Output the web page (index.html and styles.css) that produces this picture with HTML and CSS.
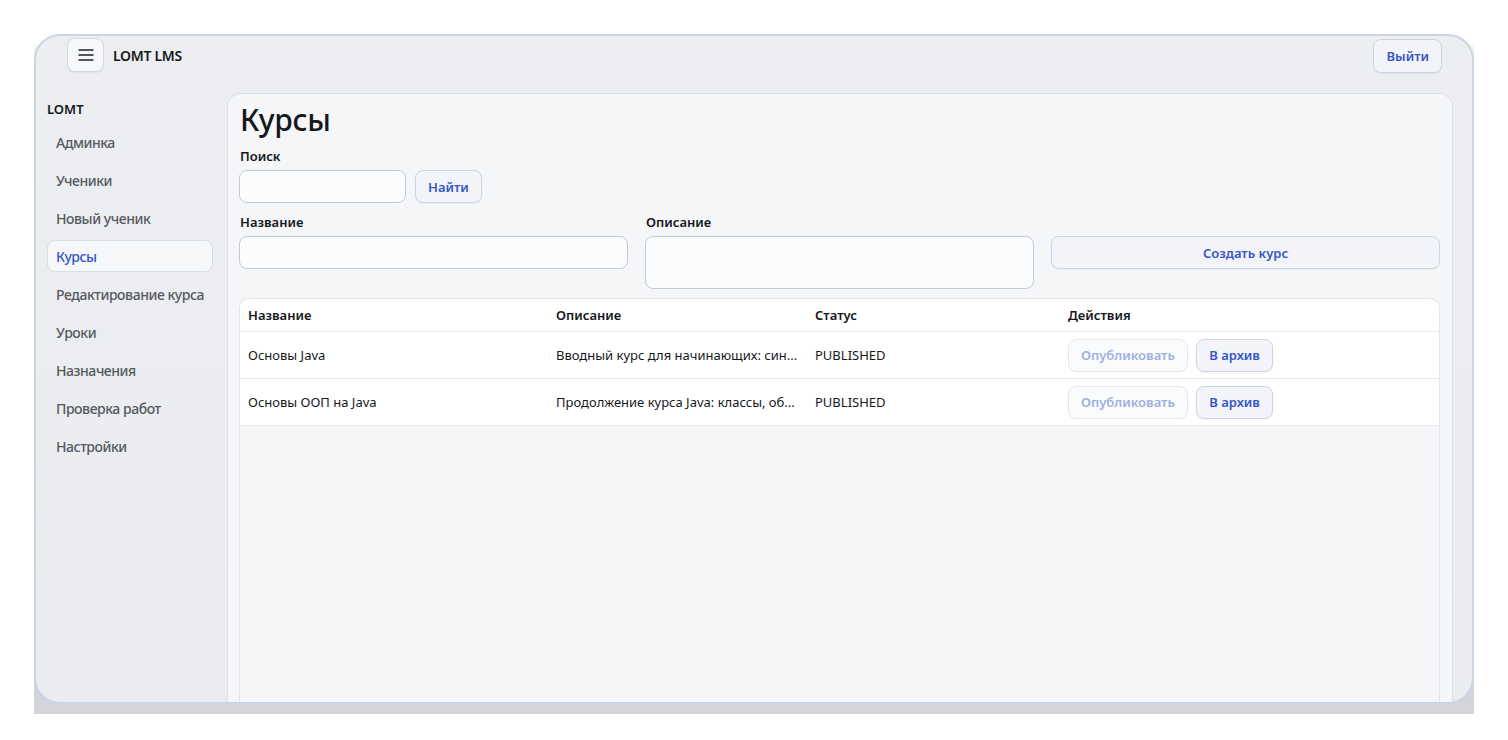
FILE: index.html
```html
<!DOCTYPE html>
<html lang="ru">
<head>
    <meta charset="UTF-8">
    <meta name="viewport" content="width=device-width, initial-scale=1.0">
    <title>LOMT LMS — Курсы</title>
    <link rel="stylesheet" href="styles.css">
</head>
<body>
    <div class="backdrop">
        <div class="app">
            <!-- Top bar -->
            <header class="topbar">
                <div class="brand">
                    <button class="menu-btn" aria-label="Меню">
                        <svg width="16" height="14" viewBox="0 0 16 14" fill="none" stroke="#1f2328" stroke-width="1.4" stroke-linecap="round">
                            <path d="M1 2h14M1 7h14M1 12h14"/>
                        </svg>
                    </button>
                    <span class="brand-name">LOMT LMS</span>
                </div>
                <button class="btn btn-soft logout">Выйти</button>
            </header>

            <div class="layout">
                <!-- Side navigation -->
                <aside class="sidebar">
                    <div class="sidebar-title">LOMT</div>
                    <nav class="nav">
                        <a class="nav-item">Админка</a>
                        <a class="nav-item">Ученики</a>
                        <a class="nav-item">Новый ученик</a>
                        <a class="nav-item active">Курсы</a>
                        <a class="nav-item">Редактирование курса</a>
                        <a class="nav-item">Уроки</a>
                        <a class="nav-item">Назначения</a>
                        <a class="nav-item">Проверка работ</a>
                        <a class="nav-item">Настройки</a>
                    </nav>
                </aside>

                <main class="panel">
                    <h1 class="page-title">Курсы</h1>

                    <label class="field-label">Поиск</label>
                    <div class="search-row">
                        <input type="text" class="input search-input">
                        <button class="btn btn-soft">Найти</button>
                    </div>

                    <!-- New course form -->
                    <div class="create-form">
                        <div class="field">
                            <label class="field-label">Название</label>
                            <input type="text" class="input">
                        </div>
                        <div class="field">
                            <label class="field-label">Описание</label>
                            <textarea class="input textarea"></textarea>
                        </div>
                        <div class="field field-action">
                            <button class="btn btn-soft btn-wide">Создать курс</button>
                        </div>
                    </div>

                    <div class="table-wrap">
                        <table class="courses">
                            <thead>
                                <tr>
                                    <th class="col-name">Название</th>
                                    <th class="col-desc">Описание</th>
                                    <th class="col-status">Статус</th>
                                    <th>Действия</th>
                                </tr>
                            </thead>
                            <tbody>
                                <tr>
                                    <td>Основы Java</td>
                                    <td>Вводный курс для начинающих: син...</td>
                                    <td>PUBLISHED</td>
                                    <td class="actions">
                                        <button class="btn btn-row" disabled>Опубликовать</button>
                                        <button class="btn btn-row btn-soft">В архив</button>
                                    </td>
                                </tr>
                                <tr>
                                    <td>Основы ООП на Java</td>
                                    <td>Продолжение курса Java: классы, об...</td>
                                    <td>PUBLISHED</td>
                                    <td class="actions">
                                        <button class="btn btn-row" disabled>Опубликовать</button>
                                        <button class="btn btn-row btn-soft">В архив</button>
                                    </td>
                                </tr>
                            </tbody>
                        </table>
                    </div>
                </main>
            </div>
        </div>
    </div>
</body>
</html>
```

FILE: styles.css
```css
body {
  margin: 0;
  padding: 34px 0 0 34px;
  background: #ffffff;
  font-family: 'Noto Sans', 'Open Sans', sans-serif;
  color: #16181c;
}
/* Gray base under the rounded app window */
.backdrop {
  width: 1440px;
  height: 680px;
  background: linear-gradient(180deg, #ffffff 0, #ffffff 8px, #d6d8dc 30px, #d3d5da 100%);
}
.app {
  box-sizing: border-box;
  height: 670px;
  border: 2px solid #c9d4e5;
  border-radius: 26px;
  background: linear-gradient(180deg, #eceef1 0%, #eaecef 100%);
  overflow: hidden;
  display: flex;
  flex-direction: column;
}
/* Top bar */
.topbar {
  height: 57px;
  flex-shrink: 0;
  display: flex;
  justify-content: space-between;
  align-items: flex-start;
  padding: 2px 31px 0 31px;
  box-sizing: border-box;
}
.brand {
  display: flex;
  align-items: center;
  gap: 9px;
}
.menu-btn {
  width: 37px;
  height: 34px;
  display: flex;
  align-items: center;
  justify-content: center;
  background: #f7f8fa;
  border: 1px solid #d4d8de;
  border-radius: 8px;
  padding: 0;
  box-shadow: 0 1px 2px rgba(0, 0, 0, 0.06);
}
.brand-name {
  font-size: 14px;
  font-weight: 600;
  letter-spacing: -0.3px;
}
.btn {
  font-family: inherit;
  font-size: 13px;
  font-weight: 600;
  border-radius: 8px;
  cursor: pointer;
}
.btn-soft {
  background: #f3f4f9;
  border: 1px solid #cdd3e2;
  color: #3556c8;
  box-shadow: 0 1px 2px rgba(30, 40, 80, 0.06);
}
.logout {
  height: 34px;
  padding: 0 12px;
  margin-top: 1px;
  margin-right: -1px;
}
/* Body: sidebar + panel */
.layout {
  flex: 1;
  display: flex;
  min-height: 0;
}
.sidebar {
  width: 191px;
  flex-shrink: 0;
  box-sizing: border-box;
  padding: 8px 14px 0 11px;
}
.sidebar-title {
  font-size: 13px;
  font-weight: 600;
  line-height: 16px;
  margin-bottom: 9px;
}
.nav {
  display: flex;
  flex-direction: column;
  gap: 6px;
}
.nav-item {
  height: 32px;
  display: flex;
  align-items: center;
  padding: 0 8px;
  box-sizing: border-box;
  border: 1px solid transparent;
  border-radius: 8px;
  font-size: 14px;
  font-weight: 500;
  letter-spacing: -0.45px;
  white-space: nowrap;
  color: #56595f;
  cursor: pointer;
}
.nav-item.active {
  background: #f6f7f9;
  border-color: #d9dce2;
  color: #3556c8;
}
/* Main panel */
.panel {
  flex: 1;
  margin-right: 19px;
  background: #f5f6f8;
  border: 1px solid #dde0e5;
  border-bottom: none;
  border-radius: 14px 14px 0 0;
  padding: 8px 12px 0 11px;
  display: flex;
  flex-direction: column;
  min-width: 0;
}
.page-title {
  margin: 0 0 9px 1px;
  font-size: 30px;
  font-weight: 500;
  line-height: 36px;
  letter-spacing: -0.3px;
}
.field-label {
  display: block;
  font-size: 13px;
  font-weight: 600;
  line-height: 18px;
  margin: 0 0 5px 1px;
}
.search-row {
  display: flex;
  gap: 9px;
  margin-bottom: 10px;
}
.input {
  box-sizing: border-box;
  height: 33px;
  background: #fbfcfd;
  border: 1px solid #c6c9cf;
  border-radius: 8px;
  font-family: inherit;
  font-size: 13px;
  padding: 0 10px;
}
.search-input {
  width: 167px;
}
.search-row .btn {
  height: 33px;
  padding: 0 12px;
}
.create-form {
  display: grid;
  grid-template-columns: repeat(3, 1fr);
  gap: 17px;
  margin-bottom: 9px;
}
.field {
  display: flex;
  flex-direction: column;
}
.field .input {
  width: 100%;
}
.textarea {
  height: 53px;
  resize: none;
}
.field-action {
  padding-top: 23px;
}
.btn-wide {
  width: 100%;
  height: 33px;
}
/* Course table */
.table-wrap {
  flex: 1;
  border: 1px solid #e1e4e9;
  border-bottom: none;
  border-radius: 10px 10px 0 0;
  overflow: hidden;
}
.courses {
  width: 100%;
  border-collapse: collapse;
  font-size: 13px;
}
.courses th,
.courses td {
  background: #ffffff;
  text-align: left;
  padding: 0 8px;
  border-bottom: 1px solid #e6e8ec;
  white-space: nowrap;
}
.courses th {
  height: 32px;
  font-weight: 600;
}
.courses td {
  height: 46px;
}
.col-name {
  width: 292px;
}
.col-desc {
  width: 243px;
}
.col-status {
  width: 237px;
}
.actions .btn + .btn {
  margin-left: 5px;
}
.btn-row {
  height: 33px;
  padding: 0 12px;
}
.btn-row[disabled] {
  background: #fafbfd;
  border: 1px solid #e4e7ee;
  color: #9eb0e0;
  cursor: default;
}
```
